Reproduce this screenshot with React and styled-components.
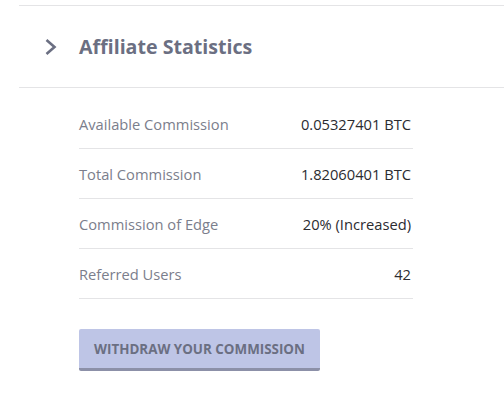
import React from "react";
import styled, { createGlobalStyle } from "styled-components";

const Global = createGlobalStyle`
  html, body { margin: 0; padding: 0; background: #ffffff; }
  body { font-family: "Open Sans", "Noto Sans", sans-serif; }
`;

const Panel = styled.section`
  margin-top: 5px;
  margin-left: 19px;
  border-top: 1px solid #e4e4e6;
`;

const Header = styled.div`
  display: flex;
  align-items: center;
  height: 81px;
  padding-left: 25px;
  border-bottom: 1px solid #e4e4e6;
`;

const Chevron = styled.svg`
  width: 14px;
  height: 18px;
  margin-right: 21px;
  flex: none;
`;

const Title = styled.h2`
  margin: 0 0 1px 0;
  font-size: 19.6px;
  font-weight: 700;
  color: #6b6f82;
`;

const Body = styled.div`
  padding: 11px 0 0 60px;
`;

const List = styled.div`
  width: 334px;
`;

const Row = styled.div`
  display: flex;
  align-items: center;
  justify-content: space-between;
  height: 49px;
  border-bottom: 1px solid #e4e4e6;
  padding: 0 2px 0 0;
  font-size: 14.7px;
`;

const Label = styled.span`
  color: #7b7e8c;
`;

const Value = styled.span`
  color: #2b2b30;
`;

const Button = styled.button`
  margin-top: 30px;
  width: 241px;
  height: 42px;
  border: none;
  border-bottom: 3px solid #8c90a8;
  border-radius: 2px;
  background: #bec5e6;
  color: #6b6f82;
  font-family: "Open Sans", sans-serif;
  font-weight: 700;
  font-size: 13.4px;
  padding: 0;
  display: flex;
  align-items: center;
  justify-content: center;
  cursor: pointer;
`;

const rows = [
  ["Available Commission", "0.05327401 BTC"],
  ["Total Commission", "1.82060401 BTC"],
  ["Commission of Edge", "20% (Increased)"],
  ["Referred Users", "42"],
];

export default function App() {
  return (
    <>
      <Global />
      <Panel>
        <Header>
          <Chevron viewBox="0 0 14 18">
            <path d="M2.5 2 L10.5 9 L2.5 16" fill="none" stroke="#6b6f82" strokeWidth="2.6" />
          </Chevron>
          <Title>Affiliate Statistics</Title>
        </Header>
        <Body>
          <List>
            {rows.map(([l, v]) => (
              <Row key={l}>
                <Label>{l}</Label>
                <Value>{v}</Value>
              </Row>
            ))}
          </List>
          <Button>WITHDRAW YOUR COMMISSION</Button>
        </Body>
      </Panel>
    </>
  );
}
